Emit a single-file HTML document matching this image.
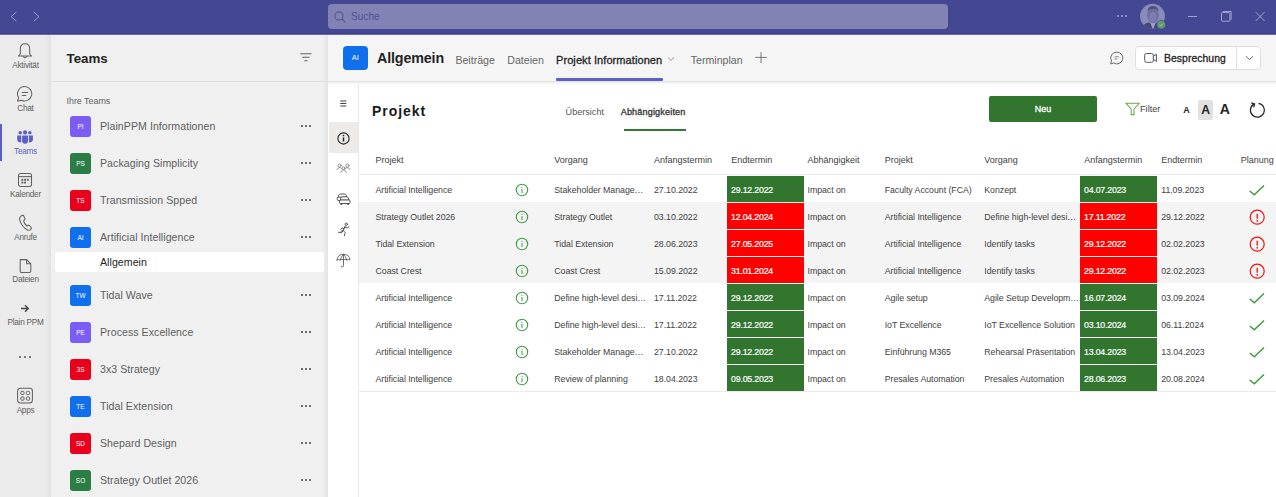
<!DOCTYPE html>
<html><head><meta charset="utf-8">
<style>
*{box-sizing:border-box;margin:0;padding:0}
html,body{width:1276px;height:497px;overflow:hidden;background:#fff;font-family:"Liberation Sans",sans-serif;color:#242424}
div,span,svg{position:absolute}
.t{white-space:nowrap;line-height:1}
.ri{left:0;width:51px;text-align:center;font-size:8.2px;color:#5f5f5f;letter-spacing:-0.25px}
.tm{left:100px;font-size:10.6px;color:#5e5e5e;letter-spacing:0.05px}
.av{left:70px;width:21px;height:21px;border-radius:3px;color:#fff;font-size:6.5px;text-align:center;line-height:21px}
.dots{left:300px;width:12px;height:3px}
.dots i{position:absolute;top:0;width:2.2px;height:2.2px;border-radius:50%;background:#424242}
.th{font-size:9px;color:#424242}
.td{font-size:8.8px;color:#424242;letter-spacing:-0.05px}
.cell{height:26px;color:#fff;font-size:8.8px;font-weight:normal;-webkit-text-stroke:0.2px #fff;line-height:28.6px;padding-left:4px;letter-spacing:-0.2px}
</style></head><body>

<div style="left:0;top:0;width:1276px;height:35px;background:#444791"></div>
<div style="left:0;top:33px;width:1276px;height:1px;background:#3d3f88"></div>
<div style="left:0;top:34px;width:1276px;height:1px;background:#6a6ba8"></div>
<svg style="left:9px;top:10px" width="10" height="13"><path d="M7.4 2 L2.1 6.6 L7.4 11.2" stroke="#9c9dcb" stroke-width="1" fill="none"/></svg>
<svg style="left:31px;top:10px" width="10" height="13"><path d="M2.8 2 L8 6.6 L2.8 11.2" stroke="#9c9dcb" stroke-width="1" fill="none"/></svg>
<div style="left:328px;top:4px;width:620px;height:24.5px;background:#8283b4;border-radius:4px"></div>
<svg style="left:333px;top:9.5px" width="16" height="16"><circle cx="6" cy="6" r="4.1" stroke="#50538f" stroke-width="1.1" fill="none"/><path d="M9 9 L12.4 12.4" stroke="#50538f" stroke-width="1.1"/></svg>
<div class="t" style="left:351px;top:12.1px;font-size:10.1px;color:#4d5094">Suche</div>
<div style="left:1116.8000000000002px;top:15.2px;width:2.2px;height:2.2px;border-radius:50%;background:#a5a6d4"></div>
<div style="left:1120.7px;top:15.2px;width:2.2px;height:2.2px;border-radius:50%;background:#a5a6d4"></div>
<div style="left:1124.7px;top:15.2px;width:2.2px;height:2.2px;border-radius:50%;background:#a5a6d4"></div>
<svg style="left:1139px;top:3px" width="28" height="28">
<defs><clipPath id="cc"><circle cx="13.5" cy="13.2" r="12.4"/></clipPath></defs>
<g clip-path="url(#cc)">
<rect x="0" y="0" width="28" height="28" fill="#8a8bbd"/>
<ellipse cx="14" cy="12.5" rx="5.8" ry="7.5" fill="#6e6f9e"/>
<path d="M8.5 9 Q8.5 3 14 3 Q19.5 3 19.5 9 Q18 5.5 14 5.8 Q10 5.5 8.5 9 Z" fill="#4d4e7a"/>
<ellipse cx="14" cy="14" rx="3.8" ry="5" fill="#7d7eaf"/>
<path d="M2 28 Q4 20 10 19.5 L14 22 L18 19.5 Q24 20 26 28 Z" fill="#46476f"/>
<path d="M11.5 20 L14 27 L16.5 20 Z" fill="#9e9fcb"/>
</g>
<circle cx="22.2" cy="21.6" r="4.4" fill="#629a6d" stroke="#444791" stroke-width="0.7"/>
<path d="M20.4 21.9 L21.7 23 L24 20.6" stroke="#b4d0b8" stroke-width="0.9" fill="none"/>
</svg>
<div style="left:1188px;top:15.5px;width:9px;height:1px;background:#a3a4d0"></div>
<svg style="left:1219px;top:9px" width="16" height="16"><rect x="2.5" y="3.6" width="8.4" height="8.6" rx="0.6" stroke="#a3a4d0" stroke-width="1" fill="none"/><path d="M3.8 2.5 L12.1 2.5 L12.1 10.8" stroke="#a3a4d0" stroke-width="1" fill="none"/></svg>
<svg style="left:1253px;top:10px" width="14" height="13"><path d="M2.6 2 L11.6 11 M11.6 2 L2.6 11" stroke="#a3a4d0" stroke-width="1" fill="none"/></svg>
<div style="left:0;top:35px;width:51px;height:462px;background:#ebebeb"></div>
<div style="left:45px;top:35px;width:6px;height:462px;background:linear-gradient(to right,rgba(0,0,0,0),rgba(0,0,0,0.045))"></div>
<div style="left:0;top:124px;width:2px;height:37px;background:#5b5fc7"></div>
<svg style="left:17px;top:42px" width="16" height="18"><path d="M3.3 12 L3.3 6.8 Q3.3 1.8 8 1.8 Q12.7 1.8 12.7 6.8 L12.7 12 L14.6 14 L1.4 14 Z" stroke="#616161" stroke-width="1.05" fill="none" stroke-linejoin="round"/><path d="M6 14.3 Q8 17 10 14.3" stroke="#616161" stroke-width="1.05" fill="none"/></svg>
<div class="t ri" style="top:62.1px">Aktivität</div>
<svg style="left:16px;top:85px" width="18" height="18"><path d="M9 1.6 A7.2 7.2 0 1 1 5.3 15.2 L1.6 16.2 L2.6 12.6 A7.2 7.2 0 0 1 9 1.6 Z" stroke="#616161" stroke-width="1.05" fill="none" stroke-linejoin="round"/><path d="M5.8 7.4 L12.2 7.4 M5.8 10.4 L10.2 10.4" stroke="#616161" stroke-width="1.05"/></svg>
<div class="t ri" style="top:104.8px">Chat</div>
<svg style="left:16px;top:129px" width="19" height="16">
<circle cx="9.05" cy="3.4" r="2.1" fill="#5b5fc7"/><circle cx="4.2" cy="3.7" r="1.75" fill="#5b5fc7"/><circle cx="13.8" cy="3.7" r="1.75" fill="#5b5fc7"/>
<path d="M6.1 6.4 H12 V11.8 Q12 14.7 9.05 14.7 Q6.1 14.7 6.1 11.8 Z" fill="#5b5fc7"/>
<path d="M1.2 6.4 H5.2 V13.4 Q1.2 13.4 1.2 10.4 Z" fill="#5b5fc7"/>
<path d="M12.9 6.4 H16.9 V10.4 Q16.9 13.4 12.9 13.4 Z" fill="#5b5fc7"/>
</svg>
<div class="t ri" style="top:147.9px;color:#5b5fc7">Teams</div>
<svg style="left:17px;top:172px" width="16" height="16"><rect x="1.5" y="1.5" width="13" height="13" rx="2" stroke="#616161" stroke-width="1.05" fill="none"/><path d="M1.5 4.6 L14.5 4.6" stroke="#616161" stroke-width="1.05"/><g fill="#616161"><rect x="4.4" y="6.8" width="1.9" height="1.9"/><rect x="7.1" y="6.8" width="1.9" height="1.9"/><rect x="9.8" y="6.8" width="1.9" height="1.9"/><rect x="4.4" y="9.6" width="1.9" height="1.9"/><rect x="7.1" y="9.6" width="1.9" height="1.9"/></g></svg>
<div class="t ri" style="top:190.8px">Kalender</div>
<svg style="left:17px;top:214px" width="16" height="18"><path d="M4.6 1.6 L6.4 1.3 L8.1 5.1 L6.6 6.8 Q7.2 9.8 10 12 L11.8 11 L14.6 14 L13.6 15.6 Q12.4 16.7 10.6 16 Q4.8 13.2 2.6 5.7 Q2.2 3 4.6 1.6 Z" stroke="#616161" stroke-width="1.05" fill="none" stroke-linejoin="round"/></svg>
<div class="t ri" style="top:234.2px">Anrufe</div>
<svg style="left:18px;top:258px" width="15" height="16"><path d="M2.2 1.6 L8.6 1.6 L12.8 5.8 L12.8 13 Q12.8 14.4 11.4 14.4 L3.6 14.4 Q2.2 14.4 2.2 13 Z" stroke="#616161" stroke-width="1.05" fill="none" stroke-linejoin="round"/><path d="M8.6 1.6 L8.6 5.8 L12.8 5.8" stroke="#616161" stroke-width="1.05" fill="none"/></svg>
<div class="t ri" style="top:276.1px">Dateien</div>
<svg style="left:20px;top:304px" width="10" height="9"><path d="M1 4.5 L8.2 4.5 M5 1.3 L8.3 4.5 L5 7.7" stroke="#424242" stroke-width="1.3" fill="none"/></svg>
<div class="t ri" style="top:318.5px">Plain PPM</div>
<div style="left:19.2px;top:356.3px;width:2.2px;height:2.2px;border-radius:50%;background:#555"></div>
<div style="left:24.0px;top:356.3px;width:2.2px;height:2.2px;border-radius:50%;background:#555"></div>
<div style="left:28.799999999999997px;top:356.3px;width:2.2px;height:2.2px;border-radius:50%;background:#555"></div>
<svg style="left:16px;top:387px" width="18" height="18"><rect x="1.6" y="1.3" width="14.8" height="14.6" rx="2.6" stroke="#616161" stroke-width="1.05" fill="none"/><g stroke="#616161" stroke-width="1" fill="none"><rect x="4.8" y="4.4" width="3.2" height="3.2" rx="0.9"/><rect x="10.4" y="4.4" width="3.2" height="3.2" rx="0.9"/><rect x="4.8" y="10" width="3.2" height="3.2" rx="0.9"/><rect x="10.4" y="10" width="3.2" height="3.2" rx="0.9"/></g></svg>
<div class="t ri" style="top:407.0px">Apps</div>
<div style="left:51px;top:35px;width:277px;height:462px;background:#f0f0f0"></div>
<div style="left:322px;top:35px;width:6px;height:462px;background:linear-gradient(to right,rgba(0,0,0,0),rgba(0,0,0,0.05))"></div>
<div class="t" style="left:66.5px;top:52.2px;font-size:13.3px;font-weight:bold;color:#242424">Teams</div>
<svg style="left:299px;top:52px" width="14" height="11"><path d="M1.3 1.8 L12.5 1.8 M3.3 5.3 L10.5 5.3 M5.3 8.8 L8.5 8.8" stroke="#616161" stroke-width="1.05"/></svg>
<div style="left:51px;top:81px;width:277px;height:1px;background:#e0e0e0"></div>
<div class="t" style="left:66.5px;top:96.8px;font-size:8.9px;color:#616161">Ihre Teams</div>
<div class="av" style="top:115.5px;background:#7b5cf5">PI</div>
<div class="t tm" style="top:120.7px">PlainPPM Informationen</div>
<div class="dots" style="top:124.7px"><i style="left:1.3px"></i><i style="left:5.1px"></i><i style="left:9px"></i></div>
<div class="av" style="top:152.5px;background:#2b7d45">PS</div>
<div class="t tm" style="top:157.7px">Packaging Simplicity</div>
<div class="dots" style="top:161.7px"><i style="left:1.3px"></i><i style="left:5.1px"></i><i style="left:9px"></i></div>
<div class="av" style="top:189.5px;background:#e8001c">TS</div>
<div class="t tm" style="top:194.7px">Transmission Spped</div>
<div class="dots" style="top:198.7px"><i style="left:1.3px"></i><i style="left:5.1px"></i><i style="left:9px"></i></div>
<div class="av" style="top:226.5px;background:#0f6fec">AI</div>
<div class="t tm" style="top:231.7px">Artificial Intelligence</div>
<div class="dots" style="top:235.7px"><i style="left:1.3px"></i><i style="left:5.1px"></i><i style="left:9px"></i></div>
<div class="av" style="top:285.0px;background:#0f6fec">TW</div>
<div class="t tm" style="top:290.2px">Tidal Wave</div>
<div class="dots" style="top:294.2px"><i style="left:1.3px"></i><i style="left:5.1px"></i><i style="left:9px"></i></div>
<div class="av" style="top:322.0px;background:#7b5cf5">PE</div>
<div class="t tm" style="top:327.2px">Process Excellence</div>
<div class="dots" style="top:331.2px"><i style="left:1.3px"></i><i style="left:5.1px"></i><i style="left:9px"></i></div>
<div class="av" style="top:359.0px;background:#e8001c">3S</div>
<div class="t tm" style="top:364.2px">3x3 Strategy</div>
<div class="dots" style="top:368.2px"><i style="left:1.3px"></i><i style="left:5.1px"></i><i style="left:9px"></i></div>
<div class="av" style="top:396.0px;background:#0f6fec">TE</div>
<div class="t tm" style="top:401.2px">Tidal Extension</div>
<div class="dots" style="top:405.2px"><i style="left:1.3px"></i><i style="left:5.1px"></i><i style="left:9px"></i></div>
<div class="av" style="top:432.5px;background:#e8001c">SD</div>
<div class="t tm" style="top:437.7px">Shepard Design</div>
<div class="dots" style="top:441.7px"><i style="left:1.3px"></i><i style="left:5.1px"></i><i style="left:9px"></i></div>
<div class="av" style="top:469.5px;background:#2b7d45">SO</div>
<div class="t tm" style="top:474.7px">Strategy Outlet 2026</div>
<div class="dots" style="top:478.7px"><i style="left:1.3px"></i><i style="left:5.1px"></i><i style="left:9px"></i></div>
<div style="left:55px;top:252px;width:269px;height:20px;background:#fff;border-radius:3px"></div>
<div class="t tm" style="top:256.5px;color:#242424">Allgemein</div>
<div style="left:328px;top:35px;width:948px;height:462px;background:#fff"></div>
<div style="left:328px;top:35px;width:948px;height:47px;background:#f5f5f5"></div>
<div style="left:328px;top:81px;width:948px;height:1px;background:#e3e3e3"></div>
<div class="t" style="left:343px;top:45.6px;width:24.6px;height:24.6px;border-radius:4px;background:#0f6fec;color:#fff;font-size:7.5px;text-align:center;line-height:24.6px">AI</div>
<div class="t" style="left:377px;top:51.3px;font-size:14.3px;font-weight:bold;color:#242424;letter-spacing:-0.15px">Allgemein</div>
<div class="t" style="left:455.4px;top:54.9px;font-size:10.6px;color:#666">Beiträge</div>
<div class="t" style="left:507.3px;top:54.9px;font-size:10.6px;color:#666">Dateien</div>
<div class="t" style="left:556px;top:54.6px;font-size:11px;-webkit-text-stroke:0.3px #242424;color:#242424;letter-spacing:0.08px">Projekt Informationen</div>
<svg style="left:667px;top:56px" width="8" height="6"><path d="M1 1.5 L4 4.3 L7 1.5" stroke="#8a8a8a" stroke-width="0.9" fill="none"/></svg>
<div style="left:556px;top:78.3px;width:107px;height:2.5px;background:#5b5fc7;border-radius:1px"></div>
<div class="t" style="left:690.8px;top:54.9px;font-size:10.6px;color:#666">Terminplan</div>
<svg style="left:754px;top:51px" width="14" height="14"><path d="M7 1.1 L7 12.1 M1.2 6.4 L12.8 6.4" stroke="#707070" stroke-width="0.95"/></svg>
<svg style="left:1109px;top:51px" width="15" height="15"><path d="M7.8 1.1 A5.9 5.9 0 1 1 4.8 12 L1.6 12.9 L2.5 10 A5.9 5.9 0 0 1 7.8 1.1 Z" stroke="#666" stroke-width="0.95" fill="none" stroke-linejoin="round"/><path d="M5.6 5.8 L10 5.8 M5.6 8 L8.3 8" stroke="#777" stroke-width="0.85"/></svg>
<div style="left:1134.8px;top:45.5px;width:126.5px;height:24.8px;background:#fff;border:1px solid #e0e0e0;border-radius:4px"></div>
<div style="left:1236px;top:46px;width:1px;height:23.5px;background:#e0e0e0"></div>
<svg style="left:1143px;top:52px" width="16" height="12"><rect x="1.7" y="1.5" width="8.6" height="8.8" rx="1.8" stroke="#4a4a4a" stroke-width="0.95" fill="none"/><path d="M10.3 4.3 L13.4 2.4 L13.4 9.4 L10.3 7.5" stroke="#4a4a4a" stroke-width="0.95" fill="none" stroke-linejoin="round"/></svg>
<div class="t" style="left:1164px;top:53.8px;font-size:10.4px;-webkit-text-stroke:0.3px #242424;color:#242424;letter-spacing:0.05px">Besprechung</div>
<svg style="left:1245px;top:55px" width="9" height="6"><path d="M1 1.3 L4.5 4.5 L8 1.3" stroke="#616161" stroke-width="0.95" fill="none"/></svg>
<div style="left:358px;top:82px;width:1px;height:415px;background:#e8e8e8"></div>
<div style="left:328px;top:82px;width:948px;height:2px;background:linear-gradient(#ececec,#f9f9f9)"></div>
<svg style="left:340px;top:100px" width="7" height="7"><path d="M0.3 1 L6.3 1 M0.3 3.5 L6.3 3.5 M0.3 6 L6.3 6" stroke="#424242" stroke-width="1"/></svg>
<div style="left:329px;top:122.3px;width:29px;height:30.3px;background:#edebe9"></div>
<svg style="left:336px;top:131px" width="15" height="15"><circle cx="7.5" cy="7.5" r="5.6" stroke="#242424" stroke-width="1.1" fill="none"/><path d="M7.5 6.4 L7.5 10.5" stroke="#242424" stroke-width="1.5"/><circle cx="7.5" cy="4.5" r="0.85" fill="#242424"/></svg>
<svg style="left:336px;top:162px" width="15" height="12"><g stroke="#777" stroke-width="0.8" fill="none" stroke-linecap="round"><circle cx="3.6" cy="3.6" r="1.6"/><circle cx="11.4" cy="3.6" r="1.6"/><circle cx="7.5" cy="6.2" r="1.4"/><path d="M0.9 7.6 Q1.8 5.6 3.6 5.6 Q4.6 5.6 5.5 6.4 M14.1 7.6 Q13.2 5.6 11.4 5.6 Q10.4 5.6 9.5 6.4 M4.6 10.4 Q5.6 7.8 7.5 7.8 Q9.4 7.8 10.4 10.4"/></g></svg>
<svg style="left:336px;top:192px" width="15" height="14"><g stroke="#424242" stroke-width="0.9" fill="#fff"><path d="M2 6 L2.8 3.2 Q3.2 2 4.6 2 L8.5 2 Q9.8 2 10.2 3.2 L11 6 Z"/><rect x="1.3" y="5.2" width="10.5" height="3.3" rx="1"/><path d="M4.2 8.2 L5 5.8 Q5.4 4.8 6.6 4.8 L10.6 4.8 Q11.8 4.8 12.2 5.8 L13 8.2 Z"/><rect x="3.5" y="8" width="10.5" height="3.5" rx="1"/></g><g fill="#424242"><rect x="4.5" y="11.2" width="1.8" height="1.6"/><rect x="11.2" y="11.2" width="1.8" height="1.6"/></g></svg>
<svg style="left:337px;top:222px" width="14" height="15"><g stroke="#424242" stroke-width="0.9" fill="none" stroke-linecap="round"><circle cx="9.3" cy="2.3" r="1.2"/><path d="M8.2 4.2 L6.2 8.5 L4 9.3 M7.7 5.2 L10.6 5.8 L12 4.6 M7 6.5 L5 6 L3.8 7.3 M6.2 8.5 L8.2 10.5 L7.4 13.8 M6.2 8.5 L4.5 10.8 L1.6 10.3"/></g></svg>
<svg style="left:336px;top:253px" width="15" height="15"><g stroke="#5a5a5a" stroke-width="0.85" fill="none" stroke-linecap="round"><path d="M1 7 Q1.5 1.3 7.5 1.3 Q13.5 1.3 14 7 Q12.3 5.6 10.8 7 Q9.2 5.6 7.5 7 Q5.8 5.6 4.2 7 Q2.7 5.6 1 7 Z"/><path d="M7.5 1.3 Q5 3.5 4.2 7 M7.5 1.3 Q10 3.5 10.8 7 M7.5 1.3 L7.5 12.5 Q7.5 14 6.2 14 Q5.2 14 5.2 13"/></g></svg>
<div class="t" style="left:372px;top:104px;font-size:14px;font-weight:bold;color:#1b1b1b;letter-spacing:0.95px">Projekt</div>
<div class="t" style="left:565.6px;top:107.9px;font-size:9.1px;color:#555">Übersicht</div>
<div class="t" style="left:620.7px;top:107.9px;font-size:9.1px;-webkit-text-stroke:0.3px #333;color:#333;letter-spacing:0.15px">Abhängigkeiten</div>
<div style="left:624px;top:129.4px;width:62px;height:1.7px;background:#2e7a30"></div>
<div style="left:989px;top:96px;width:108px;height:25.8px;background:#31752f;border-radius:2px"></div>
<div class="t" style="left:989px;top:104.8px;width:108px;text-align:center;font-size:8.9px;-webkit-text-stroke:0.3px #fff;color:#fff;letter-spacing:0.1px">Neu</div>
<svg style="left:1125px;top:102px" width="16" height="14"><path d="M1 1.3 L14.2 1.3 L9 7 L9 12.6 L6.2 12.6 L6.2 7 Z" stroke="#6aa84f" stroke-width="1.05" fill="none" stroke-linejoin="round"/></svg>
<div class="t" style="left:1140px;top:105px;font-size:9.2px;color:#424242">Filter</div>
<div class="t" style="left:1183.2px;top:105.5px;font-size:9px;font-weight:bold;color:#242424">A</div>
<div style="left:1198px;top:100px;width:15px;height:19.8px;background:#e1e1e1;border-radius:2px"></div>
<div class="t" style="left:1201.3px;top:103.8px;font-size:12.2px;font-weight:bold;color:#242424">A</div>
<div class="t" style="left:1219.8px;top:102px;font-size:14px;font-weight:bold;color:#242424">A</div>
<svg style="left:1248px;top:101px" width="19" height="19"><path d="M6 3.1 A7 7 0 1 0 10.5 2.3" stroke="#242424" stroke-width="1.25" fill="none"/><path d="M3.2 1.9 L6.6 3 L5.6 6.4" stroke="#242424" stroke-width="1.25" fill="none"/></svg>
<div class="t th" style="left:375.5px;top:156.3px">Projekt</div>
<div class="t th" style="left:554.3px;top:156.3px">Vorgang</div>
<div class="t th" style="left:654px;top:156.3px">Anfangstermin</div>
<div class="t th" style="left:731.3px;top:156.3px">Endtermin</div>
<div class="t th" style="left:807.5px;top:156.3px">Abhängigkeit</div>
<div class="t th" style="left:884.7px;top:156.3px">Projekt</div>
<div class="t th" style="left:984.3px;top:156.3px">Vorgang</div>
<div class="t th" style="left:1084.3px;top:156.3px">Anfangstermin</div>
<div class="t th" style="left:1161.2px;top:156.3px">Endtermin</div>
<div class="t th" style="left:1240.7px;top:156.3px">Planung</div>
<div style="left:359px;top:174px;width:917px;height:1px;background:#ececec"></div>
<div style="left:359px;top:175px;width:917px;height:27px;background:#fff"></div>
<div style="left:359px;top:201.5px;width:917px;height:1px;background:#ececec"></div>
<div class="t td" style="left:375.5px;top:186.2px">Artificial Intelligence</div>
<svg style="left:515px;top:183px" width="14" height="14"><circle cx="7" cy="7" r="5.7" stroke="#3f9b46" stroke-width="1.1" fill="none"/><path d="M7 6 L7 10" stroke="#3f9b46" stroke-width="1"/><circle cx="7" cy="4.3" r="0.6" fill="#3f9b46"/></svg>
<div class="t td" style="left:554.3px;top:186.2px;width:99px;overflow:hidden">Stakeholder Manage…</div>
<div class="t td" style="left:654px;top:186.2px">27.10.2022</div>
<div class="cell" style="left:727px;top:176px;width:77px;background:#31752f">29.12.2022</div>
<div class="t td" style="left:807.5px;top:186.2px">Impact on</div>
<div class="t td" style="left:884.7px;top:186.2px">Faculty Account (FCA)</div>
<div class="t td" style="left:984.3px;top:186.2px;width:96px;overflow:hidden">Konzept</div>
<div class="cell" style="left:1080px;top:176px;width:77px;background:#31752f">04.07.2023</div>
<div class="t td" style="left:1161.2px;top:186.2px">11.09.2023</div>
<svg style="left:1248px;top:183.8px" width="18" height="13"><path d="M1.8 7 L6.3 10.8 L16 1.5" stroke="#3c9a3c" stroke-width="1.4" fill="none"/></svg>
<div style="left:359px;top:202px;width:917px;height:27px;background:#f4f4f4"></div>
<div style="left:359px;top:228.5px;width:917px;height:1px;background:#ececec"></div>
<div class="t td" style="left:375.5px;top:213.2px">Strategy Outlet 2026</div>
<svg style="left:515px;top:210px" width="14" height="14"><circle cx="7" cy="7" r="5.7" stroke="#3f9b46" stroke-width="1.1" fill="none"/><path d="M7 6 L7 10" stroke="#3f9b46" stroke-width="1"/><circle cx="7" cy="4.3" r="0.6" fill="#3f9b46"/></svg>
<div class="t td" style="left:554.3px;top:213.2px;width:99px;overflow:hidden">Strategy Outlet</div>
<div class="t td" style="left:654px;top:213.2px">03.10.2022</div>
<div class="cell" style="left:727px;top:203px;width:77px;background:#ff0000">12.04.2024</div>
<div class="t td" style="left:807.5px;top:213.2px">Impact on</div>
<div class="t td" style="left:884.7px;top:213.2px">Artificial Intelligence</div>
<div class="t td" style="left:984.3px;top:213.2px;width:96px;overflow:hidden">Define high-level desi…</div>
<div class="cell" style="left:1080px;top:203px;width:77px;background:#ff0000">17.11.2022</div>
<div class="t td" style="left:1161.2px;top:213.2px">29.12.2022</div>
<svg style="left:1249px;top:209px" width="17" height="17"><circle cx="8.2" cy="8.2" r="7" stroke="#ee1111" stroke-width="1.2" fill="none"/><path d="M8.2 4.8 L8.2 9.8" stroke="#ee1111" stroke-width="1.3"/><circle cx="8.2" cy="11.8" r="0.85" fill="#ee1111"/></svg>
<div style="left:359px;top:229px;width:917px;height:27px;background:#f4f4f4"></div>
<div style="left:359px;top:255.5px;width:917px;height:1px;background:#ececec"></div>
<div class="t td" style="left:375.5px;top:240.2px">Tidal Extension</div>
<svg style="left:515px;top:237px" width="14" height="14"><circle cx="7" cy="7" r="5.7" stroke="#3f9b46" stroke-width="1.1" fill="none"/><path d="M7 6 L7 10" stroke="#3f9b46" stroke-width="1"/><circle cx="7" cy="4.3" r="0.6" fill="#3f9b46"/></svg>
<div class="t td" style="left:554.3px;top:240.2px;width:99px;overflow:hidden">Tidal Extension</div>
<div class="t td" style="left:654px;top:240.2px">28.06.2023</div>
<div class="cell" style="left:727px;top:230px;width:77px;background:#ff0000">27.05.2025</div>
<div class="t td" style="left:807.5px;top:240.2px">Impact on</div>
<div class="t td" style="left:884.7px;top:240.2px">Artificial Intelligence</div>
<div class="t td" style="left:984.3px;top:240.2px;width:96px;overflow:hidden">Identify tasks</div>
<div class="cell" style="left:1080px;top:230px;width:77px;background:#ff0000">29.12.2022</div>
<div class="t td" style="left:1161.2px;top:240.2px">02.02.2023</div>
<svg style="left:1249px;top:236px" width="17" height="17"><circle cx="8.2" cy="8.2" r="7" stroke="#ee1111" stroke-width="1.2" fill="none"/><path d="M8.2 4.8 L8.2 9.8" stroke="#ee1111" stroke-width="1.3"/><circle cx="8.2" cy="11.8" r="0.85" fill="#ee1111"/></svg>
<div style="left:359px;top:256px;width:917px;height:27px;background:#f4f4f4"></div>
<div style="left:359px;top:282.5px;width:917px;height:1px;background:#ececec"></div>
<div class="t td" style="left:375.5px;top:267.2px">Coast Crest</div>
<svg style="left:515px;top:264px" width="14" height="14"><circle cx="7" cy="7" r="5.7" stroke="#3f9b46" stroke-width="1.1" fill="none"/><path d="M7 6 L7 10" stroke="#3f9b46" stroke-width="1"/><circle cx="7" cy="4.3" r="0.6" fill="#3f9b46"/></svg>
<div class="t td" style="left:554.3px;top:267.2px;width:99px;overflow:hidden">Coast Crest</div>
<div class="t td" style="left:654px;top:267.2px">15.09.2022</div>
<div class="cell" style="left:727px;top:257px;width:77px;background:#ff0000">31.01.2024</div>
<div class="t td" style="left:807.5px;top:267.2px">Impact on</div>
<div class="t td" style="left:884.7px;top:267.2px">Artificial Intelligence</div>
<div class="t td" style="left:984.3px;top:267.2px;width:96px;overflow:hidden">Identify tasks</div>
<div class="cell" style="left:1080px;top:257px;width:77px;background:#ff0000">29.12.2022</div>
<div class="t td" style="left:1161.2px;top:267.2px">02.02.2023</div>
<svg style="left:1249px;top:263px" width="17" height="17"><circle cx="8.2" cy="8.2" r="7" stroke="#ee1111" stroke-width="1.2" fill="none"/><path d="M8.2 4.8 L8.2 9.8" stroke="#ee1111" stroke-width="1.3"/><circle cx="8.2" cy="11.8" r="0.85" fill="#ee1111"/></svg>
<div style="left:359px;top:283px;width:917px;height:27px;background:#fff"></div>
<div style="left:359px;top:309.5px;width:917px;height:1px;background:#ececec"></div>
<div class="t td" style="left:375.5px;top:294.2px">Artificial Intelligence</div>
<svg style="left:515px;top:291px" width="14" height="14"><circle cx="7" cy="7" r="5.7" stroke="#3f9b46" stroke-width="1.1" fill="none"/><path d="M7 6 L7 10" stroke="#3f9b46" stroke-width="1"/><circle cx="7" cy="4.3" r="0.6" fill="#3f9b46"/></svg>
<div class="t td" style="left:554.3px;top:294.2px;width:99px;overflow:hidden">Define high-level desi…</div>
<div class="t td" style="left:654px;top:294.2px">17.11.2022</div>
<div class="cell" style="left:727px;top:284px;width:77px;background:#31752f">29.12.2022</div>
<div class="t td" style="left:807.5px;top:294.2px">Impact on</div>
<div class="t td" style="left:884.7px;top:294.2px">Agile setup</div>
<div class="t td" style="left:984.3px;top:294.2px;width:96px;overflow:hidden">Agile Setup Developm…</div>
<div class="cell" style="left:1080px;top:284px;width:77px;background:#31752f">16.07.2024</div>
<div class="t td" style="left:1161.2px;top:294.2px">03.09.2024</div>
<svg style="left:1248px;top:291.8px" width="18" height="13"><path d="M1.8 7 L6.3 10.8 L16 1.5" stroke="#3c9a3c" stroke-width="1.4" fill="none"/></svg>
<div style="left:359px;top:310px;width:917px;height:27px;background:#fff"></div>
<div style="left:359px;top:336.5px;width:917px;height:1px;background:#ececec"></div>
<div class="t td" style="left:375.5px;top:321.2px">Artificial Intelligence</div>
<svg style="left:515px;top:318px" width="14" height="14"><circle cx="7" cy="7" r="5.7" stroke="#3f9b46" stroke-width="1.1" fill="none"/><path d="M7 6 L7 10" stroke="#3f9b46" stroke-width="1"/><circle cx="7" cy="4.3" r="0.6" fill="#3f9b46"/></svg>
<div class="t td" style="left:554.3px;top:321.2px;width:99px;overflow:hidden">Define high-level desi…</div>
<div class="t td" style="left:654px;top:321.2px">17.11.2022</div>
<div class="cell" style="left:727px;top:311px;width:77px;background:#31752f">29.12.2022</div>
<div class="t td" style="left:807.5px;top:321.2px">Impact on</div>
<div class="t td" style="left:884.7px;top:321.2px">IoT Excellence</div>
<div class="t td" style="left:984.3px;top:321.2px;width:96px;overflow:hidden">IoT Excellence Solution</div>
<div class="cell" style="left:1080px;top:311px;width:77px;background:#31752f">03.10.2024</div>
<div class="t td" style="left:1161.2px;top:321.2px">06.11.2024</div>
<svg style="left:1248px;top:318.8px" width="18" height="13"><path d="M1.8 7 L6.3 10.8 L16 1.5" stroke="#3c9a3c" stroke-width="1.4" fill="none"/></svg>
<div style="left:359px;top:337px;width:917px;height:27px;background:#fff"></div>
<div style="left:359px;top:363.5px;width:917px;height:1px;background:#ececec"></div>
<div class="t td" style="left:375.5px;top:348.2px">Artificial Intelligence</div>
<svg style="left:515px;top:345px" width="14" height="14"><circle cx="7" cy="7" r="5.7" stroke="#3f9b46" stroke-width="1.1" fill="none"/><path d="M7 6 L7 10" stroke="#3f9b46" stroke-width="1"/><circle cx="7" cy="4.3" r="0.6" fill="#3f9b46"/></svg>
<div class="t td" style="left:554.3px;top:348.2px;width:99px;overflow:hidden">Stakeholder Manage…</div>
<div class="t td" style="left:654px;top:348.2px">27.10.2022</div>
<div class="cell" style="left:727px;top:338px;width:77px;background:#31752f">29.12.2022</div>
<div class="t td" style="left:807.5px;top:348.2px">Impact on</div>
<div class="t td" style="left:884.7px;top:348.2px">Einführung M365</div>
<div class="t td" style="left:984.3px;top:348.2px;width:96px;overflow:hidden">Rehearsal Präsentation</div>
<div class="cell" style="left:1080px;top:338px;width:77px;background:#31752f">13.04.2023</div>
<div class="t td" style="left:1161.2px;top:348.2px">13.04.2023</div>
<svg style="left:1248px;top:345.8px" width="18" height="13"><path d="M1.8 7 L6.3 10.8 L16 1.5" stroke="#3c9a3c" stroke-width="1.4" fill="none"/></svg>
<div style="left:359px;top:364px;width:917px;height:27px;background:#fff"></div>
<div style="left:359px;top:390.5px;width:917px;height:1px;background:#ececec"></div>
<div class="t td" style="left:375.5px;top:375.2px">Artificial Intelligence</div>
<svg style="left:515px;top:372px" width="14" height="14"><circle cx="7" cy="7" r="5.7" stroke="#3f9b46" stroke-width="1.1" fill="none"/><path d="M7 6 L7 10" stroke="#3f9b46" stroke-width="1"/><circle cx="7" cy="4.3" r="0.6" fill="#3f9b46"/></svg>
<div class="t td" style="left:554.3px;top:375.2px;width:99px;overflow:hidden">Review of planning</div>
<div class="t td" style="left:654px;top:375.2px">18.04.2023</div>
<div class="cell" style="left:727px;top:365px;width:77px;background:#31752f">09.05.2023</div>
<div class="t td" style="left:807.5px;top:375.2px">Impact on</div>
<div class="t td" style="left:884.7px;top:375.2px">Presales Automation</div>
<div class="t td" style="left:984.3px;top:375.2px;width:96px;overflow:hidden">Presales Automation</div>
<div class="cell" style="left:1080px;top:365px;width:77px;background:#31752f">28.06.2023</div>
<div class="t td" style="left:1161.2px;top:375.2px">20.08.2024</div>
<svg style="left:1248px;top:372.8px" width="18" height="13"><path d="M1.8 7 L6.3 10.8 L16 1.5" stroke="#3c9a3c" stroke-width="1.4" fill="none"/></svg>
</body></html>
